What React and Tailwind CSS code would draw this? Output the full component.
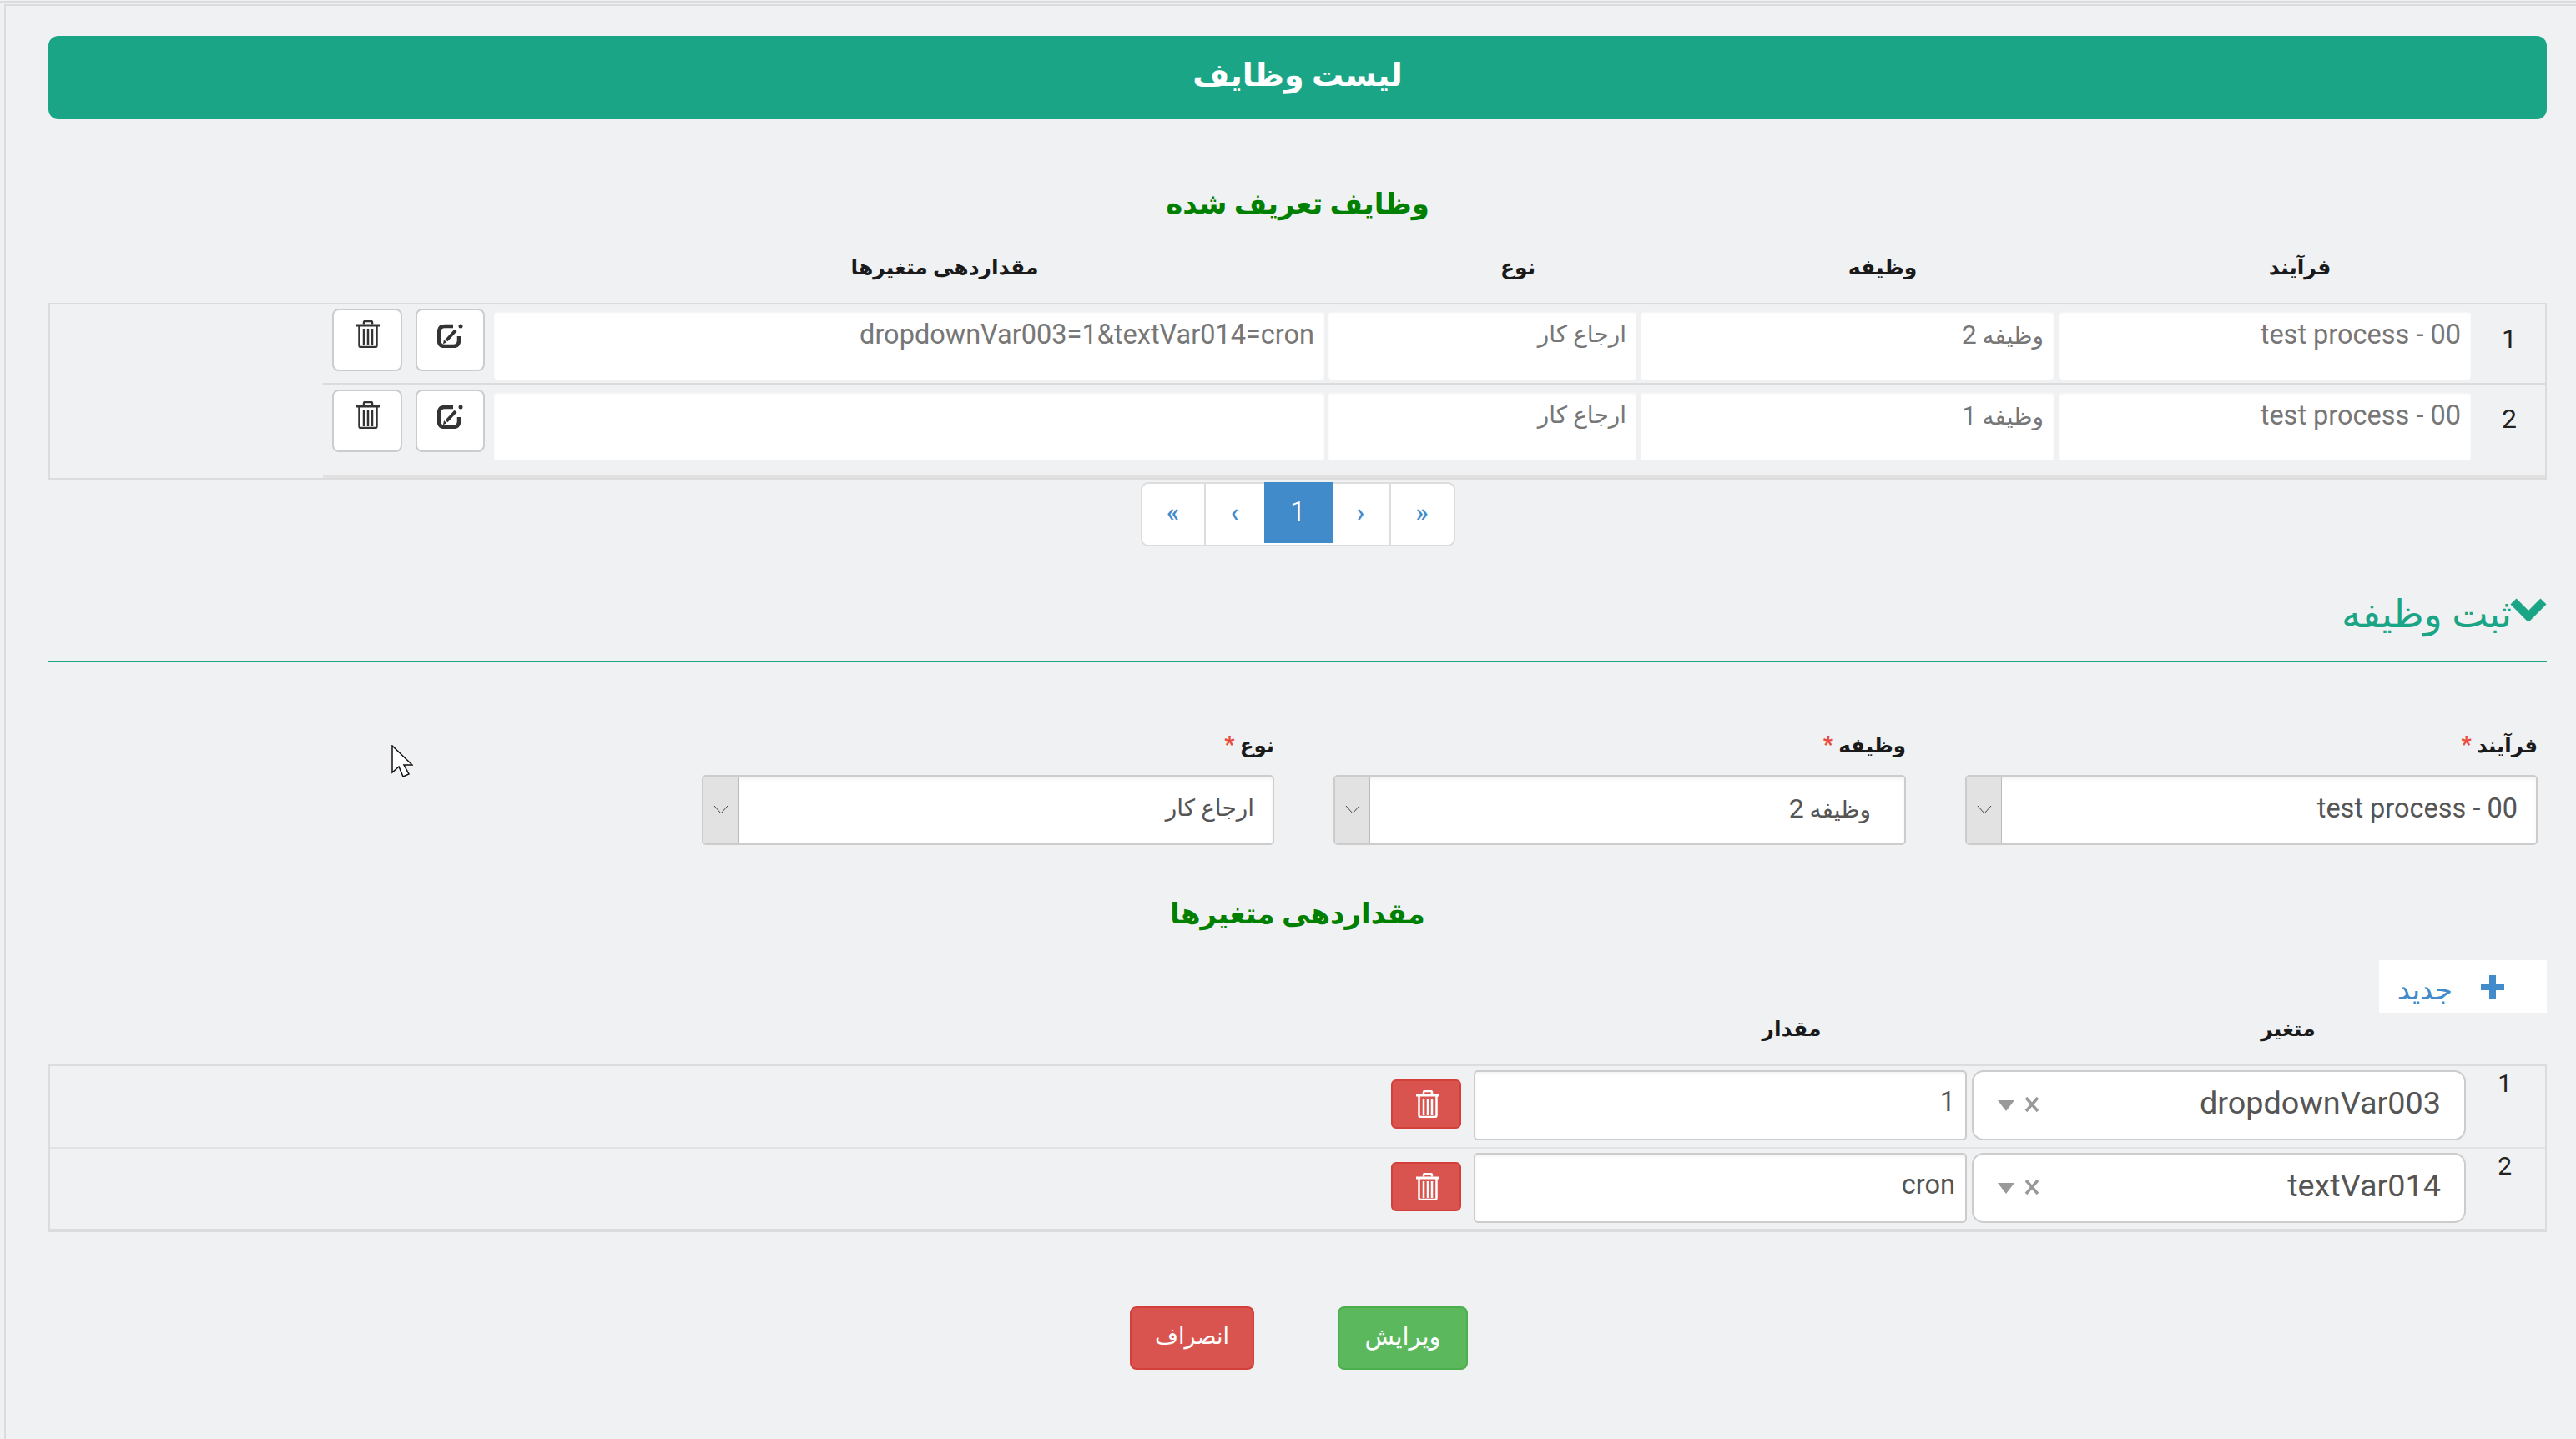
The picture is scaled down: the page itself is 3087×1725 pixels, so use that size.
const FONT = "font-['Roboto','DejaVu_Sans',sans-serif]";

function TrashIcon({ className = "" }) {
  return (
    <svg viewBox="0 0 28 33" className={className} fill="none" stroke="currentColor">
      <path d="M9 4.5V2.500Q9 1 10.500 1H17.500Q19 1 19 2.500V4.500" strokeWidth="2.500" />
      <path d="M0 6H28" strokeWidth="3" />
      <path d="M3.500 7V30Q3.500 32 5.500 32H22.500Q24.500 32 24.500 30V7" strokeWidth="2.500" />
      <path d="M9 10V30M14 10V30M19 10V30" strokeWidth="2.500" />
    </svg>
  );
}

function EditIcon({ className = "" }) {
  return (
    <svg viewBox="0 0 31 29" className={className} fill="none" stroke="currentColor">
      <path d="M19 3H9Q2 3 2 10V20Q2 27 9 27H19Q26 27 26 20V15" strokeWidth="4.500" />
      <path d="M11 20L22 8" strokeWidth="4" />
      <path d="M10 22L8.500 20.500L8 23Z" fill="currentColor" strokeWidth="1.500" />
      <circle cx="28" cy="3" r="2.500" fill="currentColor" stroke="none" />
    </svg>
  );
}

function Field({ w, children, arabic }) {
  return (
    <div className={`${w} h-[82px] shrink-0 rounded-[4px] bg-white px-[12px] pt-[8px] text-right leading-[40px] text-[#777] shadow-[inset_0_2px_2px_rgba(0,0,0,0.05)] ${arabic ? "text-[28px]" : "text-[32.5px]"}`}>
      {children}
    </div>
  );
}

function TaskRow({ n, digit, vars, last }) {
  return (
    <div className={`ml-[327px] flex ${last ? "h-[112px] border-b-[3px] border-[#e0e0e0] pt-[9px]" : "h-[96px] border-b-2 border-[#dcdcdc] pt-[8px]"}`}>
      <div className={`w-[89px] shrink-0 pr-[34px] text-[32px] leading-[40px] text-[#222] ${last ? "pt-[12px]" : "pt-[13px]"}`}>{n}</div>
      <div className="flex pl-[11px]">
        <Field w="w-[493px]">test process - 00</Field>
        <div className="w-[7px]" />
        <Field w="w-[495px]" arabic>وظیفه <span className="text-[32px]">{digit}</span></Field>
        <div className="w-[5px]" />
        <Field w="w-[369px]" arabic>ارجاع کار</Field>
        <div className="w-[5px]" />
        <Field w="w-[995px]">{vars}</Field>
        <div className="w-[11px]" />
        <button className="-mt-[3px] flex h-[75px] w-[83px] shrink-0 justify-center rounded-[8px] border-2 border-[#ccc] bg-white pt-[16px] text-[#333]">
          <EditIcon className="h-[29px] w-[31px]" />
        </button>
        <div className="w-[16px]" />
        <button className="-mt-[3px] flex h-[75px] w-[84px] shrink-0 justify-center rounded-[8px] border-2 border-[#ccc] bg-white pt-[12px] text-[#333]">
          <TrashIcon className="-mr-[2px] h-[33px] w-[28px]" />
        </button>
      </div>
    </div>
  );
}

function SelectBox({ label, children, arabic, pad }) {
  return (
    <div className="w-[686px] shrink-0">
      <div className="h-[50px] text-[24.5px] leading-[50px] font-bold text-[#1a1a1a]">
        {label} <span className="text-[27px] text-[#e74c3c]">*</span>
      </div>
      <div className="mt-[11px] flex h-[84px] overflow-hidden rounded-[5px] border-2 border-[#ccc] bg-white shadow-[inset_0_4px_4px_rgba(0,0,0,0.04)]">
        <div className={`grow pt-[16px] leading-[44px] text-[#555] ${pad} ${arabic ? "text-[28px]" : "text-[32.5px]"}`}>{children}</div>
        <div className="flex w-[42px] shrink-0 items-center justify-center border-r border-[#bbb] bg-[#e2e2e2]">
          <svg viewBox="0 0 18 12" className="h-[12px] w-[18px]" fill="none" stroke="#444" strokeWidth="1">
            <path d="M1 1L9 10L17 1" />
          </svg>
        </div>
      </div>
    </div>
  );
}

function VarRow({ value, input, n, last }) {
  return (
    <div className={`flex ${last ? "h-[100px] border-b-4 border-[#dcdcdc]" : "h-[99px] border-b-2 border-[#e2e3e5]"}`}>
      <div className="w-[95px] shrink-0 pt-[1px] pr-[40px] text-[30px] leading-[40px] text-[#222]">{n}</div>
      <div className="flex pt-[5px]">
        <div className="flex h-[84px] w-[592px] shrink-0 items-center justify-between rounded-[14px] border-2 border-[#ccc] bg-white pr-[28px] pl-[29px] text-[37.8px] text-[#555]">
          <span className="-mt-[6px]">{value}</span>
          <span className="-mt-[3px] flex items-center gap-[12px]" dir="ltr">
            <svg viewBox="0 0 20 13" className="mt-[4px] h-[13px] w-[20px]"><path d="M0 0H20L10 13Z" fill="#999" /></svg>
            <svg viewBox="0 0 18 18" className="h-[18px] w-[18px]" fill="none" stroke="#999" strokeWidth="3.500"><path d="M2 1L16 17M16 1L2 17" /></svg>
          </span>
        </div>
        <div className="w-[6px]" />
        <div className="h-[84px] w-[591px] shrink-0 rounded-[5px] border-2 border-[#ccc] bg-white pt-[14px] pr-[12px] text-[32.5px] leading-[44px] text-[#555] shadow-[inset_0_3px_3px_rgba(0,0,0,0.04)]">{input}</div>
        <div className="w-[15px]" />
        <button className="mt-[11px] flex h-[59px] w-[84px] shrink-0 items-center justify-center rounded-[6px] border-2 border-[#d43f3a] bg-[#d9534f] text-white">
          <TrashIcon className="-mr-[3px] h-[33px] w-[28px]" />
        </button>
      </div>
    </div>
  );
}

function PageCell({ children, w, active, last }) {
  return (
    <div className={`flex h-full items-center justify-center ${w} ${active ? "-my-[2px] h-[77px] bg-[#428bca] text-[34px] font-light text-white" : "bg-white text-[31px] font-medium text-[#428bca]"} ${last || active ? "" : "border-r-2 border-[#ddd]"}`}>
      <span className="-mt-[3px]">{children}</span>
    </div>
  );
}

export default function App() {
  return (
    <div dir="rtl" className={`relative min-h-[1725px] overflow-hidden bg-[#f0f1f3] pt-[1px] ${FONT}`}>
      <div className="h-[2px] bg-[#dcdcdc]" />
      <div className="mt-[2px] ml-[5px] border-t-2 border-l-2 border-[#dcdcdc]">
        <div className="flex flex-col pt-[36px] pr-[35px] pl-[51px]">
          <div className="flex h-[100px] items-center justify-center rounded-[12px] bg-[#1ba587] pb-[6px] text-[38px] font-bold text-white">لیست وظایف</div>

          <div className="mt-[71px] h-[60px] text-center text-[34px] leading-[60px] font-bold text-[#008000]">وظایف تعریف شده</div>

          <div className="mt-[17px] mb-[12px] flex h-[60px] pr-[2px] text-center text-[25px] leading-[60px] font-bold text-[#1a1a1a]">
            <div className="w-[588px]">فرآیند</div>
            <div className="w-[412px]">وظیفه</div>
            <div className="w-[462px]">نوع</div>
            <div className="w-[912px]">مقداردهی متغیرها</div>
          </div>

          <div className="h-[212px] border-2 border-[#dcdcdc]">
            <TaskRow n="1" digit="2" vars={<span dir="ltr">dropdownVar003=1&amp;textVar014=cron</span>} />
            <TaskRow n="2" digit="1" vars="" last />
          </div>

          <div dir="ltr" className="mt-[3px] flex h-[77px] w-[377px] self-center overflow-visible rounded-[9px] border-2 border-[#ddd] bg-white">
            <PageCell w="w-[76px] rounded-l-[8px]">«</PageCell>
            <PageCell w="w-[70px]" last>‹</PageCell>
            <PageCell w="w-[82px]" active>1</PageCell>
            <PageCell w="w-[70px]">›</PageCell>
            <PageCell w="w-[75px] rounded-r-[8px]" last>»</PageCell>
          </div>

          <div className="mt-[45px] flex h-[94px] items-start border-b-2 border-[#1ba587] pt-[6px] text-[46px] leading-[60px] text-[#1ba587]">
            <svg viewBox="0 0 44 30" className="mt-[9px] h-[30px] w-[44px]" fill="none" stroke="currentColor" strokeWidth="10">
              <path d="M4 6L22 24L40 6" />
            </svg>
            <span className="mr-[-2px]">ثبت وظیفه</span>
          </div>

          <div className="mt-[74px] flex gap-[71px] pr-[11px]">
            <SelectBox label="فرآیند" pad="pr-[22px]">test process - 00</SelectBox>
            <SelectBox label="وظیفه" arabic pad="pr-[40px]">وظیفه <span className="text-[32px]">2</span></SelectBox>
            <SelectBox label="نوع" arabic pad="pr-[22px]">ارجاع کار</SelectBox>
          </div>

          <div className="mt-[52px] h-[60px] text-center text-[34px] leading-[60px] font-bold text-[#008000]">مقداردهی متغیرها</div>

          <div className="mt-[26px] flex h-[63px] w-[201px] items-center gap-[34px] self-start bg-white pr-[51px] text-[34px] text-[#428bca]">
            <svg viewBox="0 0 28 28" className="h-[28px] w-[28px] shrink-0"><path d="M10 0H18V10H28V18H18V28H10V18H0V10H10Z" fill="currentColor" /></svg>
            <span className="mt-[6px] leading-[50px]">جدید</span>
          </div>

          <div className="mt-[0px] mb-[22px] flex h-[40px] pr-[2px] text-center text-[25px] leading-[40px] font-bold text-[#1a1a1a]">
            <div className="w-[616px]">متغیر</div>
            <div className="w-[574px]">مقدار</div>
          </div>

          <div className="h-[201px] border-x-2 border-t-2 border-[#dcdcdc]">
            <VarRow value="dropdownVar003" input="1" n="1" />
            <VarRow value="textVar014" input="cron" n="2" last />
          </div>

          <div className="mt-[89px] flex justify-center gap-[100px] pb-[83px] pl-[3px]">
            <button className="h-[76px] w-[156px] rounded-[8px] border-2 border-[#4cae4c] bg-[#5cb85c] pb-[3px] text-[29px] text-white">ویرایش</button>
            <button className="h-[76px] w-[149px] rounded-[8px] border-2 border-[#d43f3a] bg-[#d9534f] pb-[3px] text-[27px] text-white">انصراف</button>
          </div>
        </div>
      </div>

      <svg viewBox="0 0 26 40" className="absolute top-[893px] left-[469px] h-[40px] w-[26px]">
        <path d="M1 1V33L9 26L14 38L21 35L15 24H25Z" fill="#fff" stroke="#111" strokeWidth="1.500" />
      </svg>
    </div>
  );
}
